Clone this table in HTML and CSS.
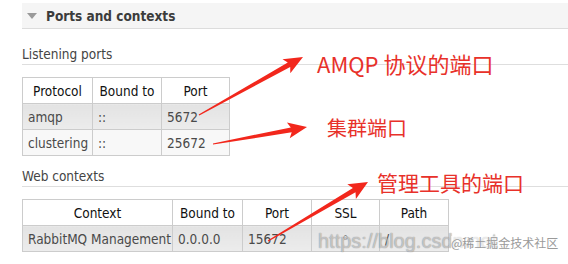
FILE: index.html
```html
<!DOCTYPE html>
<html lang="en">
<head>
<meta charset="utf-8">
<title>Ports and contexts</title>
<link rel="stylesheet" href="styles.css">
</head>
<body>
<div class="page">
  <div class="section-head"><span class="tri"></span><h2>Ports and contexts</h2></div>

  <h3>Listening ports</h3>
  <table class="list t1">
    <colgroup><col class="w70"><col class="w69"><col class="w68"></colgroup>
    <thead><tr><th>Protocol</th><th>Bound to</th><th>Port</th></tr></thead>
    <tbody>
      <tr class="alt1"><td>amqp</td><td>::</td><td>5672</td></tr>
      <tr class="alt2"><td>clustering</td><td>::</td><td>25672</td></tr>
    </tbody>
  </table>

  <h3>Web contexts</h3>
  <table class="list t2">
    <colgroup><col class="w150"><col class="w70"><col class="w69"><col class="w68"><col class="w69"></colgroup>
    <thead><tr><th>Context</th><th>Bound to</th><th>Port</th><th>SSL</th><th>Path</th></tr></thead>
    <tbody>
      <tr class="alt1"><td>RabbitMQ Management</td><td>0.0.0.0</td><td>15672</td><td class="c"><span class="off">&#9702;</span></td><td>/</td></tr>
    </tbody>
  </table>

  <div class="watermark"><span class="wm-url">https://blog.csdn.net</span><span class="wm-site">@稀土掘金技术社区</span></div>

  <svg class="annot" width="568" height="264" viewBox="0 0 568 264" aria-hidden="true">
    <polygon points="199.3,115.5 290.2,67.0 290.3,73.3 303,57 282.5,59.2 287.8,62.6 198.7,114.5"/>
    <polygon points="213.1,144.6 291.7,132.3 289.7,138.3 307,127 286.9,122.5 290.8,127.4 212.9,143.4"/>
    <polygon points="268.3,241.5 355.5,192.3 355.9,199.1 368,182 347.3,184.3 352.9,187.9 267.7,240.5"/>
  </svg>
  <div class="note n1">AMQP 协议的端口</div>
  <div class="note n2">集群端口</div>
  <div class="note n3">管理工具的端口</div>
</div>
</body>
</html>
```

FILE: styles.css
```css
html, body {
  margin: 0;
  padding: 0;
  background: #fff;
}

.page {
  position: relative;
  width: 568px;
  height: 264px;
  overflow: hidden;
  padding-left: 22px;
  box-sizing: border-box;
  font-family: "DejaVu Sans Condensed", "DejaVu Sans", sans-serif;
  font-stretch: condensed;
  font-size: 13.5px;
  color: #444;
}

.section-head {
  margin-top: 3px;
  height: 25px;
  background: #f5f5f5;
  border-bottom: 1px solid #dcdcdc;
  display: flex;
  align-items: center;
  padding-left: 5px;
  gap: 9px;
}

.tri {
  width: 0;
  height: 0;
  border-left: 5.5px solid transparent;
  border-right: 5.5px solid transparent;
  border-top: 6px solid #9a9a9a;
  margin-top: 1px;
}

.section-head h2 {
  margin: 0;
  font-size: 13.5px;
  font-weight: bold;
  color: #3c3c3c;
  line-height: 16px;
}

h3 {
  margin: 17px 0 0;
  padding-bottom: 2px;
  font-size: 13.5px;
  font-weight: normal;
  line-height: 16px;
  color: #444;
  border-bottom: 1px solid #dedede;
}

h3 + table {
  margin-top: 12px;
}

table.list + h3 {
  margin-top: 12px;
}

table.list {
  border-collapse: collapse;
  table-layout: fixed;
}

.t1 { width: 207px; }
.t2 { width: 426px; }

col.w70 { width: 70px; }
col.w69 { width: 69px; }
col.w68 { width: 68px; }
col.w150 { width: 150px; }

table.list th,
table.list td {
  border: 1px solid #cccccc;
  height: 26px;
  padding: 0 5px;
  box-sizing: border-box;
  white-space: nowrap;
  overflow: hidden;
  vertical-align: middle;
}

table.list th {
  font-weight: normal;
  color: #111;
  background: #fff;
  text-align: center;
}

table.list td {
  text-align: left;
  color: #4a4a4a;
}

table.list td.c { text-align: center; }

.off {
  font-size: 15px;
  position: relative;
  top: -1px;
}

tr.alt1 td {
  background: linear-gradient(#e3e3e3, #ececec);
}

tr.alt2 td {
  background: #f8f8f8;
}

.annot {
  position: absolute;
  left: 0;
  top: 0;
  fill: #f2271c;
}

.note {
  position: absolute;
  font-family: "Noto Sans CJK SC", sans-serif;
  color: #e8312a;
  line-height: 1;
  white-space: nowrap;
}

.n1 { left: 317px; top: 52px; font-size: 22px; }
.n2 { left: 327px; top: 118px; font-size: 20px; }
.n3 { left: 377px; top: 172px; font-size: 21px; }

.watermark {
  position: absolute;
  left: 318px;
  top: 231px;
  white-space: nowrap;
  line-height: 20px;
}

.wm-url {
  font-family: "Liberation Sans", sans-serif;
  font-size: 20px;
  color: rgba(255, 255, 255, 0.5);
  text-shadow: 0 0 1px rgba(0, 0, 0, 0.35), 0 0 1px rgba(0, 0, 0, 0.2);
}

.wm-site {
  position: absolute;
  left: 133px;
  top: 5px;
  font-family: "Noto Sans CJK SC", sans-serif;
  font-size: 12px;
  line-height: 14px;
  color: #9a9a9a;
  background: rgba(255, 255, 255, 0.6);
}
```
